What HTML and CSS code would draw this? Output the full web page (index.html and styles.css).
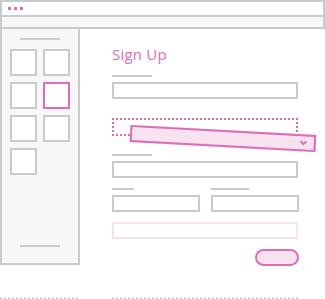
FILE: index.html
```html
<!DOCTYPE html>
<html lang="en">
<head>
    <meta charset="UTF-8">
    <meta name="viewport" content="width=device-width, initial-scale=1.0">
    <title>Sign Up wireframe</title>
    <link rel="stylesheet" href="styles.css">
</head>
<body>

    <!-- janela: barra de titulo + barra de ferramentas -->
    <div class="window-top">
        <div class="titlebar">
            <span class="dot"></span>
            <span class="dot"></span>
            <span class="dot"></span>
        </div>
        <div class="toolbar"></div>
    </div>

    <div class="page">
        <aside class="sidebar">
            <div class="side-line"></div>
            <div class="tiles">
                <div class="tile"></div>
                <div class="tile"></div>
                <div class="tile"></div>
                <div class="tile active"></div>
                <div class="tile"></div>
                <div class="tile"></div>
                <div class="tile"></div>
            </div>
            <div class="side-line bottom"></div>
        </aside>

        <main class="content">
            <h2 class="title">Sign Up</h2>

            <div class="label"></div>
            <div class="field"></div>

            <div class="drop-slot"></div>

            <div class="label gap-top"></div>
            <div class="field"></div>

            <div class="row">
                <div class="col">
                    <div class="label short"></div>
                    <div class="field"></div>
                </div>
                <div class="col">
                    <div class="label mid"></div>
                    <div class="field"></div>
                </div>
            </div>

            <div class="field ghost"></div>

            <div class="actions">
                <div class="pill"></div>
            </div>

            <!-- campo sendo arrastado -->
            <div class="dragging">
                <svg class="chevron" width="7" height="5" viewBox="0 0 7 5">
                    <path d="M0.5 0.8 L3.5 3.8 L6.5 0.8" fill="none" stroke="#e06cb8" stroke-width="2"/>
                </svg>
            </div>
        </main>
    </div>

    <div class="footer">
        <div class="dots-line side"></div>
        <div class="dots-line main"></div>
    </div>

</body>
</html>
```

FILE: styles.css
```css
* {
    box-sizing: border-box;
}

body {
    margin: 0;
    width: 325px;
    background: #ffffff;
    font-family: "Open Sans", "DejaVu Sans", sans-serif;
}

.window-top {
    border: 2px solid #c8cbce;
    height: 29px;
}

.titlebar {
    height: 15px;
    border-bottom: 2px solid #c8cbce;
    display: flex;
    gap: 3px;
    padding: 5px 0 0 6px;
}

.dot {
    width: 3px;
    height: 3px;
    background: #e06cb8;
}

.toolbar {
    height: 10px;
    background: #f7f7f7;
}

.page {
    display: flex;
}

.sidebar {
    width: 80px;
    height: 236px;
    background: #f7f7f7;
    border: 2px solid #c8cbce;
    border-top: none;
    display: flex;
    flex-direction: column;
    align-items: center;
    padding-top: 9px;
    padding-bottom: 16px;
}

.side-line {
    width: 40px;
    height: 2px;
    background: #c8cbce;
}

.side-line.bottom {
    margin-top: auto;
}

.tiles {
    align-self: flex-start;
    margin: 9px 0 0 8px;
    display: grid;
    grid-template-columns: 27px 27px;
    gap: 6px;
}

.tile {
    width: 27px;
    height: 27px;
    background: #ffffff;
    border: 2px solid #c8cbce;
}

.tile.active {
    border-color: #e06cb8;
}

.content {
    position: relative;
    flex: 1;
    padding: 15px 0 0 32px;
}

.title {
    margin: 0;
    font-size: 15px;
    line-height: 20px;
    font-weight: 400;
    color: #e06cb8;
    letter-spacing: 0.2px;
}

.label {
    width: 40px;
    height: 2px;
    background: #c8cbce;
    margin: 11px 0 5px;
}

.label.gap-top {
    margin-top: 18px;
}

.label.short {
    width: 22px;
    margin-top: 0;
}

.label.mid {
    width: 38px;
    margin-top: 0;
}

.field {
    width: 186px;
    height: 17px;
    border: 2px solid #c8cbce;
}

.drop-slot {
    width: 186px;
    height: 18px;
    margin-top: 19px;
    border: 2px dotted #e06cb8;
}

.row {
    display: flex;
    gap: 11px;
    width: 187px;
    margin-top: 10px;
}

.col {
    flex: 1;
}

.col .field {
    width: 100%;
}

.field.ghost {
    margin-top: 10px;
    border-color: #f7e3ef;
}

.actions {
    width: 187px;
    display: flex;
    justify-content: flex-end;
    margin-top: 10px;
}

.pill {
    width: 44px;
    height: 17px;
    border-radius: 9px;
    border: 2px solid #e06cb8;
    background: #f7e3ef;
}

.dragging {
    position: absolute;
    left: 50px;
    top: 101px;
    width: 186px;
    height: 17px;
    background: #f7e3ef;
    border: 2px solid #e06cb8;
    transform: rotate(3.1deg);
    display: flex;
    align-items: center;
    justify-content: flex-end;
    padding-right: 7px;
    box-shadow: 0 0 1px rgba(224, 108, 184, 0.4);
}

.footer {
    display: flex;
    margin-top: 31px;
}

.dots-line {
    height: 2px;
    background: repeating-linear-gradient(to right, #d3d5d8 0 2px, transparent 2px 4px);
}

.dots-line.side {
    width: 80px;
}

.dots-line.main {
    width: 187px;
    margin-left: 32px;
}
```
